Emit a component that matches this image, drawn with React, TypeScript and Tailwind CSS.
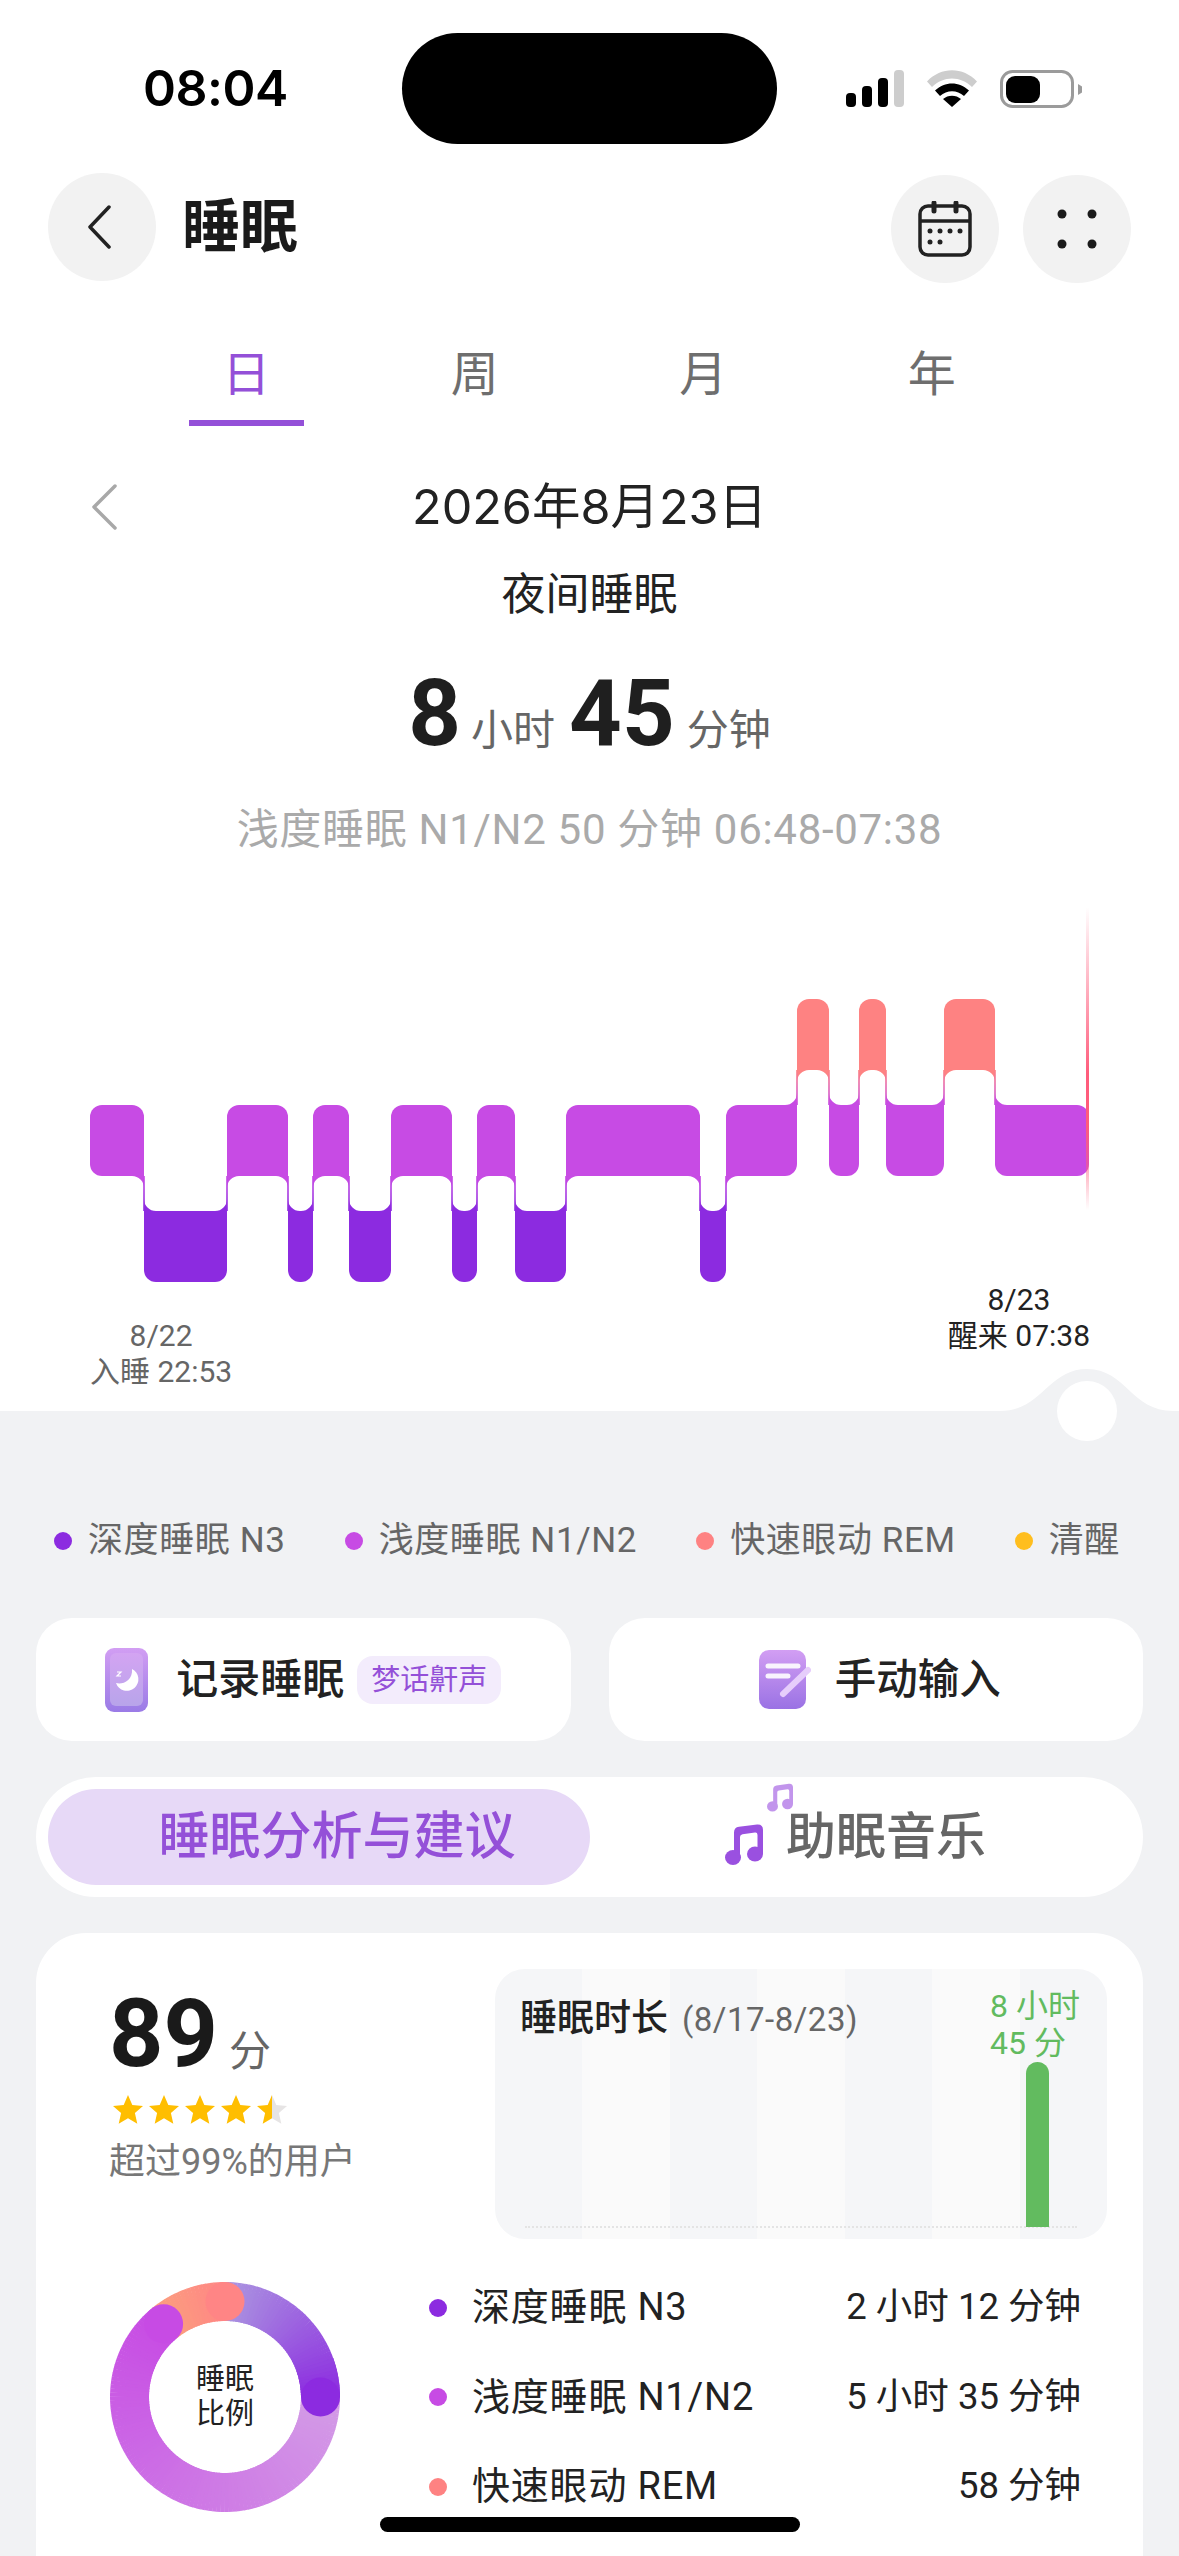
import React from 'react';

type Block = { x0: number; x1: number; lvl: 'rem' | 'light' | 'deep' };

const LEVEL_Y = { rem: 99, light: 205, deep: 311 };
const LEVEL_COLOR = { rem: '#fe8282', light: '#c74be4', deep: '#8c2be0' };
const BAND = 71;
const R = 12;

const blocks: Block[] = [
    { x0: 90, x1: 144, lvl: 'light' },
    { x0: 144, x1: 227, lvl: 'deep' },
    { x0: 227, x1: 288, lvl: 'light' },
    { x0: 288, x1: 313, lvl: 'deep' },
    { x0: 313, x1: 349, lvl: 'light' },
    { x0: 349, x1: 391, lvl: 'deep' },
    { x0: 391, x1: 452, lvl: 'light' },
    { x0: 452, x1: 477, lvl: 'deep' },
    { x0: 477, x1: 515, lvl: 'light' },
    { x0: 515, x1: 566, lvl: 'deep' },
    { x0: 566, x1: 700, lvl: 'light' },
    { x0: 700, x1: 726, lvl: 'deep' },
    { x0: 726, x1: 797, lvl: 'light' },
    { x0: 797, x1: 829, lvl: 'rem' },
    { x0: 829, x1: 859, lvl: 'light' },
    { x0: 859, x1: 886, lvl: 'rem' },
    { x0: 886, x1: 944, lvl: 'light' },
    { x0: 944, x1: 995, lvl: 'rem' },
    { x0: 995, x1: 1089, lvl: 'light' },
];

const Connector: React.FC<{ a: Block; b: Block }> = ({ a, b }) => {
    const x = b.x0;
    const upperLeft = LEVEL_Y[a.lvl] < LEVEL_Y[b.lvl];
    const upper = upperLeft ? a : b;
    const lower = upperLeft ? b : a;
    const yU = LEVEL_Y[upper.lvl] + BAND;
    const yL = LEVEL_Y[lower.lvl];
    const dirU = upperLeft ? -1 : 1;
    const dirL = -dirU;
    const sweepU = upperLeft ? 0 : 1;
    const sweepL = upperLeft ? 1 : 0;
    const id = `cn${x}`;
    return (
        <g>
            <defs>
                <linearGradient id={id} x1="0" y1="0" x2="0" y2="1">
                    <stop offset="0" stopColor={LEVEL_COLOR[upper.lvl]} />
                    <stop offset="1" stopColor={LEVEL_COLOR[lower.lvl]} />
                </linearGradient>
            </defs>
            <rect x={upperLeft ? x - R : x} y={yU - R} width={R} height={R} fill={LEVEL_COLOR[upper.lvl]} />
            <rect x={upperLeft ? x : x - R} y={yL} width={R} height={R} fill={LEVEL_COLOR[lower.lvl]} />
            <path d={`M${x + dirU * R} ${yU}L${x} ${yU}L${x} ${yU + R}A${R} ${R} 0 0 ${sweepU} ${x + dirU * R} ${yU}Z`} fill={LEVEL_COLOR[upper.lvl]} />
            <path d={`M${x} ${yL}L${x + dirL * R} ${yL}A${R} ${R} 0 0 ${sweepL} ${x} ${yL - R}Z`} fill={LEVEL_COLOR[lower.lvl]} />
            <rect x={x - 0.8} y={yU} width={1.6} height={yL - yU} fill={`url(#${id})`} />
        </g>
    );
};

const SleepChart: React.FC = () => (
    <svg width="1179" height="382" viewBox="0 0 1179 382" className="block">
        <defs>
            <linearGradient id="nowLine" x1="0" y1="0" x2="0" y2="1">
                <stop offset="0" stopColor="#ff5c7c" stopOpacity="0" />
                <stop offset="0.55" stopColor="#ff5c7c" />
                <stop offset="0.72" stopColor="#ff5c7c" />
                <stop offset="1" stopColor="#ff5c7c" stopOpacity="0" />
            </linearGradient>
        </defs>
        {blocks.map((b) => (
            <rect
                key={b.x0}
                x={b.x0}
                y={LEVEL_Y[b.lvl]}
                width={b.x1 - b.x0}
                height={BAND}
                rx={Math.min(R, (b.x1 - b.x0) / 2)}
                fill={LEVEL_COLOR[b.lvl]}
            />
        ))}
        {blocks.slice(1).map((b, i) => (
            <Connector key={b.x0} a={blocks[i]} b={b} />
        ))}
        <rect x="1086" y="7" width="3" height="303" fill="url(#nowLine)" />
    </svg>
);

const lerp = (a: string, b: string, t: number) => {
    const pa = [1, 3, 5].map((i) => parseInt(a.slice(i, i + 2), 16));
    const pb = [1, 3, 5].map((i) => parseInt(b.slice(i, i + 2), 16));
    return `rgb(${pa.map((v, i) => Math.round(v + (pb[i] - v) * t)).join(',')})`;
};

const polar = (deg: number, r: number) => {
    const rad = ((deg - 90) * Math.PI) / 180;
    return [115 + r * Math.cos(rad), 115 + r * Math.sin(rad)];
};

const Arc: React.FC<{ from: number; to: number; start: number; end: number; c0: string; c1: string }> = ({ from, to, start, end, c0, c1 }) => {
    const segs = [];
    for (let d = from; d < to; d += 2) {
        const [x0, y0] = polar(d, 95.5);
        const [x1, y1] = polar(Math.min(d + 2.6, to), 95.5);
        const t = (d - start) / (end - start);
        segs.push(<line key={d} x1={x0} y1={y0} x2={x1} y2={y1} stroke={lerp(c0, c1, t)} strokeWidth="39" />);
    }
    const [cx, cy] = polar(to, 95.5);
    return (
        <g>
            {segs}
            <circle cx={cx} cy={cy} r="19.5" fill={c1} />
        </g>
    );
};

const Donut: React.FC = () => (
    <div className="relative w-[230px] h-[230px] shrink-0">
        <svg width="230" height="230" viewBox="0 0 230 230" className="block">
            <Arc from={0} to={90} start={0} end={90} c0="#ab95e0" c1="#8c2be0" />
            <Arc from={320} to={360} start={320} end={360} c0="#fb9f7e" c1="#ff8585" />
            <Arc from={90} to={320} start={90} end={320} c0="#d39be6" c1="#c74be4" />
            <Arc from={70} to={90} start={0} end={90} c0="#ab95e0" c1="#8c2be0" />
        </svg>
        <div className="absolute inset-0 flex flex-col items-center justify-center text-[29px] leading-[35px] text-[#222]">
            <span>睡眠</span>
            <span>比例</span>
        </div>
    </div>
);

const Star: React.FC<{ half?: boolean }> = ({ half }) => (
    <svg width="30" height="29" viewBox="0 0 30 29">
        <defs>
            <linearGradient id="halfStar" x1="0" y1="0" x2="1" y2="0">
                <stop offset="0.5" stopColor="#ffbe00" />
                <stop offset="0.5" stopColor="#e6e4e4" />
            </linearGradient>
        </defs>
        <path d="M15 0l4.3 10.1 10.7.9-8.1 7.1 2.4 10.7L15 23.3l-9.3 5.5 2.4-10.7L0 11l10.7-.9z" fill={half ? 'url(#halfStar)' : '#ffbe00'} />
    </svg>
);

const StatusIcons: React.FC = () => (
    <div className="flex items-center">
        <svg width="58" height="37" viewBox="0 0 58 37" className="block">
            <rect x="0" y="23" width="10" height="14" rx="4" fill="#000" />
            <rect x="16" y="16" width="10" height="21" rx="4" fill="#000" />
            <rect x="32" y="8" width="10" height="29" rx="4" fill="#000" />
            <rect x="48" y="0" width="10" height="37" rx="4" fill="#cdcdcd" />
        </svg>
        <svg width="50" height="37" viewBox="0 0 50 37" className="block ml-[23px]">
            <path d="M0 11.5C14-3.5 36-3.5 50 11.5l-5 5.5C33.500 5.500 16.500 5.500 5 17z" fill="#cdcdcd" />
            <path d="M8 20.500C18 11 32 11 42 20.500l-5 5.500C30 19.500 20 19.500 13 26z" fill="#000" />
            <path d="M16 29C21 24.500 29 24.500 34 29l-9 8z" fill="#000" />
        </svg>
        <svg width="82" height="38" viewBox="0 0 82 38" className="block ml-[23px]">
            <rect x="1.500" y="1.500" width="71" height="35" rx="11" fill="none" stroke="#9b9b9b" strokeWidth="3" />
            <rect x="6" y="6" width="34" height="27" rx="9" fill="#000" />
            <path d="M78 14l4 2.500v6L78 25z" fill="#9b9b9b" />
        </svg>
    </div>
);

const Note: React.FC<{ w: number; h: number; className?: string }> = ({ w, h, className }) => (
    <svg width={w} height={h} viewBox="0 0 38 41" className={className}>
        <path d="M9 33V8.500Q9 3.500 14 2.800L32 .5Q38 0 38 6V30H32.500V11Q32.500 8.300 30 8.600L17.500 10.300Q15 10.700 15 13V33z" fill="#9a50e0" />
        <ellipse cx="8" cy="33.500" rx="8" ry="7.500" fill="#9a50e0" />
        <ellipse cx="30" cy="30" rx="8" ry="7.500" fill="#9a50e0" />
    </svg>
);

const legend = [
    { color: 'bg-[#8c2be0]', label: '深度睡眠 N3' },
    { color: 'bg-[#c74be4]', label: '浅度睡眠 N1/N2' },
    { color: 'bg-[#fe8282]', label: '快速眼动 REM' },
    { color: 'bg-[#ffbe1e]', label: '清醒' },
];

const stages = [
    { color: 'bg-[#8c2be0]', label: '深度睡眠 N3', value: '2 小时 12 分钟' },
    { color: 'bg-[#c74be4]', label: '浅度睡眠 N1/N2', value: '5 小时 35 分钟' },
    { color: 'bg-[#fe8282]', label: '快速眼动 REM', value: '58 分钟' },
];

const App: React.FC = () => {
    return (
        <div className="relative w-[1179px] h-[2556px] overflow-hidden bg-white flex flex-col font-[Roboto,'Noto_Sans_CJK_SC',sans-serif] text-[#222]">
            {/* status bar */}
            <div className="flex items-center pt-[33px] pl-[143px] shrink-0">
                <div className="w-[259px] font-[Inter] text-[50px] leading-[111px] font-semibold text-black tracking-[-0.5px]">08:04</div>
                <div className="w-[375px] h-[111px] rounded-full bg-black" />
                <div className="pl-[69px]">
                    <StatusIcons />
                </div>
            </div>

            {/* header */}
            <div className="flex items-start justify-between px-[48px] mt-[29px] shrink-0">
                <div className="flex items-center gap-[26px]">
                    <div className="w-[108px] h-[108px] rounded-full bg-[#f2f2f2] flex items-center justify-center">
                        <svg width="24" height="44" viewBox="0 0 24 44" className="mr-[6px]">
                            <path d="M22 2L3 22l19 20" fill="none" stroke="#222" strokeWidth="3.500" strokeLinecap="round" strokeLinejoin="round" />
                        </svg>
                    </div>
                    <div className="text-[58px] leading-[70px] font-bold text-[#1a1a1a]">睡眠</div>
                </div>
                <div className="flex gap-[24px] mt-[2px]">
                    <div className="w-[108px] h-[108px] rounded-full bg-[#f2f2f2] flex items-center justify-center">
                        <svg width="54" height="56" viewBox="0 0 54 56">
                            <rect x="2" y="5" width="50" height="49" rx="8" fill="none" stroke="#222" strokeWidth="3.500" />
                            <path d="M2 20h50" stroke="#222" strokeWidth="3.500" />
                            <path d="M16 2v8M38 2v8" stroke="#222" strokeWidth="5" strokeLinecap="round" />
                            {[12, 22, 32, 42].map((x) => (
                                <circle key={x} cx={x} cy="30" r="2.500" fill="#222" />
                            ))}
                            {[12, 22].map((x) => (
                                <circle key={x} cx={x} cy="41" r="2.500" fill="#222" />
                            ))}
                        </svg>
                    </div>
                    <div className="w-[108px] h-[108px] rounded-full bg-[#f2f2f2] flex items-center justify-center">
                        <svg width="40" height="40" viewBox="0 0 40 40">
                            <circle cx="5" cy="5" r="4.500" fill="#1a1a1a" />
                            <circle cx="35" cy="5" r="4.500" fill="#1a1a1a" />
                            <circle cx="5" cy="35" r="4.500" fill="#1a1a1a" />
                            <circle cx="35" cy="35" r="4.500" fill="#1a1a1a" />
                        </svg>
                    </div>
                </div>
            </div>

            {/* tabs */}
            <div className="grid grid-cols-[repeat(4,228.5px)] pl-[132px] mt-[60px] shrink-0 text-[48px] leading-[64px] text-[#6e6e6e]">
                <div className="flex flex-col items-center text-[#9450d8]">
                    <span>日</span>
                    <div className="w-[115px] h-[6px] mt-[13px] bg-[#9450d8]" />
                </div>
                <div className="text-center">周</div>
                <div className="text-center">月</div>
                <div className="text-center">年</div>
            </div>

            {/* date + summary */}
            <div className="grid grid-cols-[1fr_auto_1fr] items-center mt-[49px] shrink-0">
                <div className="pl-[91px]">
                    <svg width="26" height="46" viewBox="0 0 26 46">
                        <path d="M24 2L3 23l21 21" fill="none" stroke="#a8a8a8" strokeWidth="3.500" strokeLinecap="round" strokeLinejoin="round" />
                    </svg>
                </div>
                <div className="font-[Inter,'Noto_Sans_CJK_SC',sans-serif] text-[48.500px] leading-[64px] text-[#222]">2026年8月23日</div>
                <div />
            </div>
            <div className="text-center text-[44px] leading-[60px] mt-[26px] shrink-0">夜间睡眠</div>
            <div className="flex items-baseline justify-center mt-[39px] h-[100px] shrink-0 leading-[100px] text-[#666] text-[42px]">
                <span className="text-[92px] font-bold text-[#1f1f1f]">8</span>
                <span className="ml-[10px]">小时</span>
                <span className="text-[92px] font-bold text-[#1f1f1f] ml-[14px]">45</span>
                <span className="ml-[12px]">分钟</span>
            </div>
            <div className="text-center text-[42px] leading-[56px] mt-[38px] text-[#aaa] tracking-[0.7px] shrink-0">浅度睡眠 N1/N2 50 分钟 06:48-07:38</div>

            {/* chart */}
            <div className="mt-[42px] shrink-0">
                <SleepChart />
            </div>
            <div className="flex justify-between items-start pl-[90px] pr-[89px] h-[129px] shrink-0 text-[30px] leading-[36px] text-center">
                <div className="pt-[36px] text-[#666]">
                    <div>8/22</div>
                    <div>入睡 22:53</div>
                </div>
                <div className="text-[#222]">
                    <div>8/23</div>
                    <div>醒来 07:38</div>
                </div>
            </div>

            {/* lower section */}
            <div className="relative flex-1 bg-[#f1f2f4] flex flex-col">
                <svg width="173" height="42" viewBox="0 0 173 42" className="absolute left-[1000px] top-[-42px]">
                    <path d="M0 42C42 42 48 0 87 0C126 0 131 42 173 42Z" fill="#f1f2f4" />
                </svg>
                <div className="absolute left-[1057px] top-[-30px] w-[60px] h-[60px] rounded-full bg-white" />

                <div className="flex justify-between pl-[54px] pr-[59px] pt-[105px] text-[35px] leading-[50px] tracking-[0.6px] text-[#666]">
                    {legend.map((item) => (
                        <div key={item.label} className="flex items-center gap-[16px]">
                            <div className={`w-[18px] h-[18px] rounded-full ${item.color}`} />
                            <span>{item.label}</span>
                        </div>
                    ))}
                </div>

                <div className="grid grid-cols-2 gap-[38px] px-[36px] mt-[52px]">
                    <div className="h-[123px] rounded-[36px] bg-white flex items-center justify-center gap-[28px]">
                        <svg width="43" height="64" viewBox="0 0 43 64">
                            <defs>
                                <linearGradient id="moonOuter" x1="0" y1="0" x2="0" y2="1">
                                    <stop offset="0" stopColor="#d29ef3" />
                                    <stop offset="1" stopColor="#9a7be6" />
                                </linearGradient>
                                <linearGradient id="moonInner" x1="0" y1="0" x2="0" y2="1">
                                    <stop offset="0" stopColor="#d3a4f2" />
                                    <stop offset="1" stopColor="#b8a4ea" />
                                </linearGradient>
                            </defs>
                            <rect width="43" height="64" rx="9" fill="url(#moonOuter)" />
                            <rect x="5" y="5" width="33" height="53" rx="6" fill="url(#moonInner)" />
                            <path d="M27 21a11.500 11.500 0 1 1-16 14c6 2 17-2 16-14z" fill="#fff" />
                            <path d="M12 24h4l-4 4h4" fill="none" stroke="#fff" strokeWidth="1.200" />
                        </svg>
                        <div className="flex items-center gap-[13px]">
                            <span className="text-[42px] leading-[56px] font-medium">记录睡眠</span>
                            <span className="h-[48px] px-[14px] rounded-[16px] bg-[#f3ecfc] text-[#9450d8] text-[29px] leading-[48px]">梦话鼾声</span>
                        </div>
                    </div>
                    <div className="h-[123px] rounded-[36px] bg-white flex items-center justify-center gap-[24px] pl-[8px]">
                        <svg width="52" height="60" viewBox="0 0 52 60">
                            <defs>
                                <linearGradient id="noteFill" x1="0" y1="0" x2="0" y2="1">
                                    <stop offset="0" stopColor="#d29ef3" />
                                    <stop offset="1" stopColor="#9a72e4" />
                                </linearGradient>
                            </defs>
                            <rect width="47" height="59" rx="10" fill="url(#noteFill)" />
                            <path d="M9 16h30M9 26h20" stroke="#fff" strokeWidth="5" strokeLinecap="round" opacity="0.9" />
                            <path d="M24 44L49 20" stroke="#e6cdfb" strokeWidth="6" strokeLinecap="round" />
                        </svg>
                        <span className="text-[41.500px] leading-[56px] font-medium">手动输入</span>
                    </div>
                </div>

                <div className="mx-[36px] mt-[36px] h-[120px] rounded-[60px] bg-white p-[12px] flex items-center">
                    <div className="w-[542px] h-[96px] pl-[36px] rounded-[48px] bg-[#e7d9f7] text-[#9450d8] text-[51px] leading-[96px] font-medium text-center">睡眠分析与建议</div>
                    <div className="flex-1 relative flex items-center justify-center gap-[23px] text-[50px] leading-[96px] font-medium text-[#666] pr-[10px]">
                        <Note w={38} h={41} className="mt-[14px]" />
                        <span>助眠音乐</span>
                        <Note w={26} h={29} className="absolute left-[177px] top-[-6px] opacity-60" />
                    </div>
                </div>

                <div className="mx-[36px] mt-[36px] flex-1 rounded-t-[50px] bg-white">
                    <div className="flex justify-between pt-[36px] pr-[36px] pl-[73px]">
                        <div>
                            <div className="flex items-baseline mt-[15px] leading-[100px] h-[100px]">
                                <span className="text-[95px] font-bold text-[#1a1a1a]">89</span>
                                <span className="text-[42px] text-[#666] ml-[11px]">分</span>
                            </div>
                            <div className="flex gap-[6px] mt-[11px] ml-[4px]">
                                <Star />
                                <Star />
                                <Star />
                                <Star />
                                <Star half />
                            </div>
                            <div className="text-[36px] leading-[50px] text-[#777] mt-[13px]">超过99%的用户</div>
                        </div>
                        <div className="relative w-[612px] h-[270px] rounded-[30px] overflow-hidden grid grid-cols-7">
                            {[0, 1, 2, 3, 4, 5, 6].map((i) => (
                                <div key={i} className={i % 2 === 0 ? 'bg-[#f5f6f8]' : 'bg-[#fafafa]'} />
                            ))}
                            <div className="absolute left-[25px] top-[25px] flex items-baseline gap-[14px] leading-[50px]">
                                <span className="text-[37px] font-medium text-[#222]">睡眠时长</span>
                                <span className="text-[33px] tracking-[0.5px] text-[#666]">(8/17-8/23)</span>
                            </div>
                            <div className="absolute left-[495px] top-[19px] text-[32px] leading-[37px] text-[#62bb5f]">
                                <div>8 小时</div>
                                <div>45 分</div>
                            </div>
                            <div className="absolute left-[30px] right-[30px] top-[257px] border-t-2 border-dotted border-[#e4e4e4]" />
                            <div className="absolute left-[531px] top-[93px] w-[23px] h-[165px] rounded-t-[12px] bg-[#62bb5f]" />
                        </div>
                    </div>

                    <div className="flex items-center pl-[74px] pr-[62px] mt-[24px]">
                        <Donut />
                        <div className="flex-1 pl-[89px]">
                            {stages.map((s) => (
                                <div key={s.label} className="flex items-center h-[89.5px] text-[#222]">
                                    <div className={`w-[18px] h-[18px] rounded-full ${s.color}`} />
                                    <span className="ml-[25px] text-[38px] tracking-[0.8px]">{s.label}</span>
                                    <span className="ml-auto text-[36.500px]">{s.value}</span>
                                </div>
                            ))}
                        </div>
                    </div>
                </div>
            </div>

            {/* home indicator */}
            <div className="absolute left-[380px] top-[2517px] w-[420px] h-[15px] rounded-full bg-black" />
        </div>
    );
};

export default App;
